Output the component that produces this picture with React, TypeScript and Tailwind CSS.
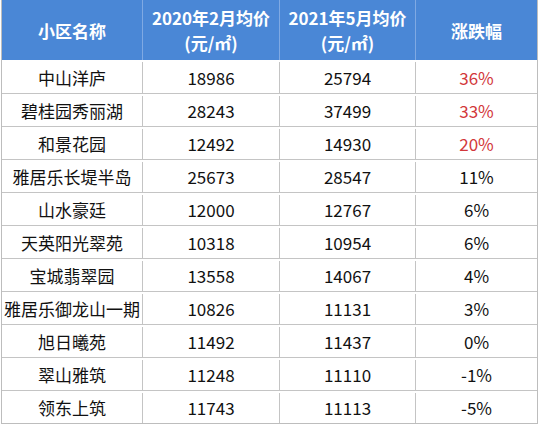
const rows: [string, string, string, string, boolean][] = [
  ["中山洋庐", "18986", "25794", "36%", true],
  ["碧桂园秀丽湖", "28243", "37499", "33%", true],
  ["和景花园", "12492", "14930", "20%", true],
  ["雅居乐长堤半岛", "25673", "28547", "11%", false],
  ["山水豪廷", "12000", "12767", "6%", false],
  ["天英阳光翠苑", "10318", "10954", "6%", false],
  ["宝城翡翠园", "13558", "14067", "4%", false],
  ["雅居乐御龙山一期", "10826", "11131", "3%", false],
  ["旭日曦苑", "11492", "11437", "0%", false],
  ["翠山雅筑", "11248", "11110", "-1%", false],
  ["领东上筑", "11743", "11113", "-5%", false],
];

const cols = "grid grid-cols-[141px_137px_136px_121px]";

export default function App() {
  return (
    <div
      className="h-[424px] w-[539px] bg-white pl-[1px]"
      style={{ fontFamily: '"Noto Sans CJK SC", "Noto Sans", sans-serif' }}
    >
      <div className="w-[537px] border-x border-b border-[#bdbdbd]">
        <div className={`${cols} h-[60px] bg-[#4a87d6] text-[17px] font-bold leading-[25px] text-white`}>
          <div className="flex items-center justify-center border-r border-[#7fa9e3]">小区名称</div>
          <div className="flex flex-col items-center justify-center border-r border-[#7fa9e3]">
            <span>2020年2月均价</span>
            <span>(元/㎡)</span>
          </div>
          <div className="flex flex-col items-center justify-center border-r border-[#7fa9e3]">
            <span>2021年5月均价</span>
            <span>(元/㎡)</span>
          </div>
          <div className="flex items-center justify-center">涨跌幅</div>
        </div>
        {rows.map(([name, a, b, pct, red], i) => (
          <div
            key={name}
            className={`${cols} h-[33px] pt-[2px] text-[17px] text-[#111] ${i > 0 ? "border-t border-[#c4c4c4]" : ""}`}
          >
            <div className="flex items-center justify-center border-r border-[#c4c4c4] whitespace-nowrap">{name}</div>
            <div className="flex items-center justify-center border-r border-[#c4c4c4]">{a}</div>
            <div className="flex items-center justify-center border-r border-[#c4c4c4]">{b}</div>
            <div className={`flex items-center justify-center ${red ? "text-[#d2373a]" : ""}`}>{pct}</div>
          </div>
        ))}
      </div>
    </div>
  );
}
